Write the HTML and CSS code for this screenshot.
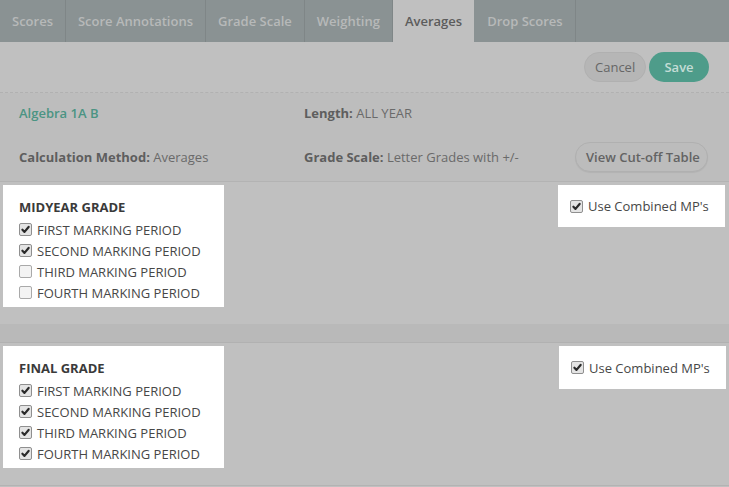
FILE: index.html
```html
<!DOCTYPE html>
<html>
<head>
<meta charset="utf-8">
<link rel="stylesheet" href="styles.css">
</head>
<body>
<nav class="tabs">
  <div class="tab">Scores</div>
  <div class="tab">Score Annotations</div>
  <div class="tab">Grade Scale</div>
  <div class="tab">Weighting</div>
  <div class="tab active">Averages</div>
  <div class="tab">Drop Scores</div>
</nav>
<div class="toolbar">
  <button class="btn cancel">Cancel</button>
  <button class="btn save">Save</button>
</div>
<div class="info">
  <div class="info-cell course">Algebra 1A B</div>
  <div class="info-cell"><b>Length:</b> ALL YEAR</div>
  <div class="info-cell"><b>Calculation Method:</b> Averages</div>
  <div class="info-cell scale-cell"><span><b>Grade Scale:</b> Letter Grades with +/-</span><button class="btn cutoff">View Cut-off Table</button></div>
</div>
<section class="group">
  <div class="card list-card">
    <div class="card-title">MIDYEAR GRADE</div>
    <ul class="checks">
      <li><span class="cb on"><svg viewBox="0 0 12 12"><path d="M2.6 6.3 L4.9 8.6 L9.4 3.2" /></svg></span>FIRST MARKING PERIOD</li>
      <li><span class="cb on"><svg viewBox="0 0 12 12"><path d="M2.6 6.3 L4.9 8.6 L9.4 3.2" /></svg></span>SECOND MARKING PERIOD</li>
      <li><span class="cb"></span>THIRD MARKING PERIOD</li>
      <li><span class="cb"></span>FOURTH MARKING PERIOD</li>
    </ul>
  </div>
  <div class="card combined"><span class="cb on"><svg viewBox="0 0 12 12"><path d="M2.6 6.3 L4.9 8.6 L9.4 3.2" /></svg></span>Use Combined MP's</div>
</section>
<div class="divider"></div>
<section class="group final">
  <div class="card list-card">
    <div class="card-title">FINAL GRADE</div>
    <ul class="checks">
      <li><span class="cb on"><svg viewBox="0 0 12 12"><path d="M2.6 6.3 L4.9 8.6 L9.4 3.2" /></svg></span>FIRST MARKING PERIOD</li>
      <li><span class="cb on"><svg viewBox="0 0 12 12"><path d="M2.6 6.3 L4.9 8.6 L9.4 3.2" /></svg></span>SECOND MARKING PERIOD</li>
      <li><span class="cb on"><svg viewBox="0 0 12 12"><path d="M2.6 6.3 L4.9 8.6 L9.4 3.2" /></svg></span>THIRD MARKING PERIOD</li>
      <li><span class="cb on"><svg viewBox="0 0 12 12"><path d="M2.6 6.3 L4.9 8.6 L9.4 3.2" /></svg></span>FOURTH MARKING PERIOD</li>
    </ul>
  </div>
  <div class="card combined"><span class="cb on"><svg viewBox="0 0 12 12"><path d="M2.6 6.3 L4.9 8.6 L9.4 3.2" /></svg></span>Use Combined MP's</div>
</section>
<div class="footer-line"></div>
</body>
</html>
```
FILE: styles.css
```css
* { box-sizing: border-box; }
html, body { margin: 0; padding: 0; }
body {
  width: 729px;
  height: 487px;
  overflow: hidden;
  background: #c0c0c0;
  font-family: "Open Sans", "Liberation Sans", sans-serif;
  font-size: 13px;
  color: #6a6a6a;
}
.tabs {
  display: flex;
  height: 42px;
  background: #8a9293;
}
.tab {
  padding: 0 12px;
  line-height: 42px;
  font-weight: 600;
  color: #b7b9b9;
  border-right: 1px solid #7f8687;
  white-space: nowrap;
}
.tab.active {
  background: #c0c0c0;
  color: #5c5c5c;
  border-right-color: #8a9293;
}
.toolbar {
  height: 51px;
  display: flex;
  justify-content: flex-end;
  align-items: center;
  gap: 3px;
  padding: 0 20px 1px 0;
  border-bottom: 1px dashed #b1b1b1;
}
.btn {
  font-family: inherit;
  font-size: 13px;
  height: 30px;
  border-radius: 15px;
  border: 1px solid transparent;
  padding: 0 10px;
  cursor: pointer;
}
.cancel {
  width: 62px;
  background: #b6b6b6;
  border-color: #b0b0b0;
  color: #666;
}
.save {
  width: 60px;
  background: #4e9c8a;
  color: #c4dcd6;
  font-weight: 600;
}
.info {
  display: grid;
  grid-template-columns: 285px 1fr;
  grid-template-rows: 20px 30px;
  row-gap: 19px;
  padding: 10px 21px 9px 19px;
  background: #bdbdbd;
  border-bottom: 1px solid #b3b3b3;
}
.info-cell {
  line-height: 20px;
  white-space: nowrap;
  align-self: center;
}
.info-cell b { font-weight: 700; color: #5e5e5e; }
.course { color: #4b9483; font-weight: 600; }
.scale-cell {
  display: flex;
  align-items: center;
  justify-content: space-between;
}
.cutoff {
  background: #bcbcbc;
  border-color: #b0b0b0;
  color: #636363;
  font-weight: 600;
  padding: 0 10px;
  width: 133px;
  box-shadow: 0 1px 1px rgba(0,0,0,0.06);
}
.group {
  display: flex;
  justify-content: space-between;
  align-items: flex-start;
  padding: 3px 3px 17px 3px;
}
.card { background: #fff; }
.list-card {
  width: 221px;
  padding: 13px 0 4px 16px;
}
.card-title {
  font-weight: 700;
  color: #3a3a3a;
  line-height: 18px;
}
.checks {
  list-style: none;
  margin: 3px 0 0;
  padding: 0;
}
.checks li {
  display: flex;
  align-items: center;
  height: 21px;
  color: #474747;
  font-size: 13px;
  white-space: nowrap;
}
.cb {
  width: 13px;
  height: 13px;
  flex: none;
  border: 1px solid #a9a9a9;
  border-radius: 2px;
  background: #f3f3f3;
  margin-right: 5px;
  display: inline-flex;
  align-items: center;
  justify-content: center;
}
.cb.on { background: #e4e4e4; border-color: #8f8f8f; }
.cb svg { width: 11px; height: 11px; }
.cb path { fill: none; stroke: #2a2a2a; stroke-width: 2.4; stroke-linecap: round; stroke-linejoin: round; }
.combined {
  width: 167px;
  height: 42px;
  display: flex;
  align-items: center;
  padding-left: 12px;
  color: #474747;
  white-space: nowrap;
  margin-right: 1px;
}
.divider {
  height: 19px;
  background: #b9b9b9;
  border-bottom: 1px solid #b1b1b1;
}
.final .combined { height: 43px; margin-right: 0; }
.footer-line {
  border-top: 1px solid #b3b3b3;
}
```
